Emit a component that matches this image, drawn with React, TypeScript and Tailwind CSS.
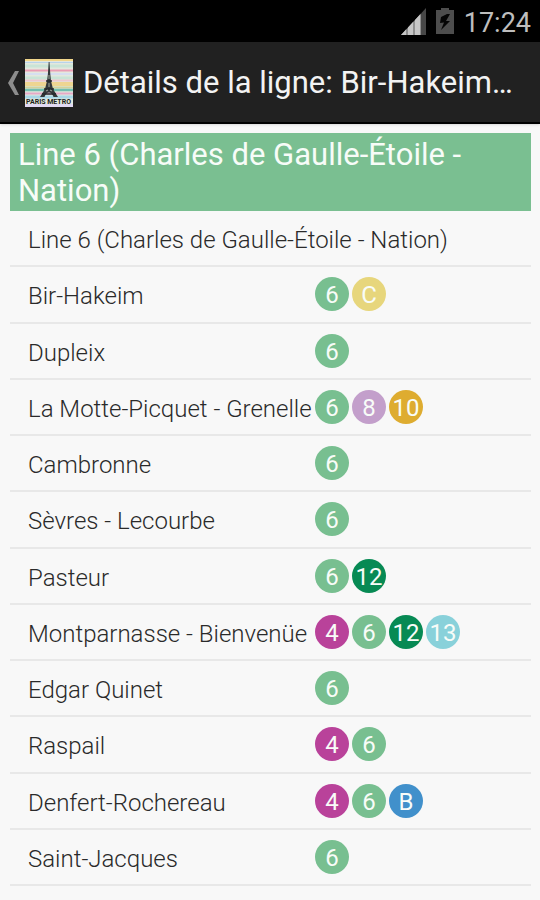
import React from "react";

const lineColors: Record<string, string> = {
  "4": "bg-[#b9429a]",
  "6": "bg-[#78bf90]",
  "8": "bg-[#c39fcb]",
  "10": "bg-[#deac30]",
  "12": "bg-[#078a54]",
  "13": "bg-[#89d1da]",
  B: "bg-[#4190cb]",
  C: "bg-[#e7d67c]",
};

const stations = [
  { name: "Bir-Hakeim", lines: ["6", "C"] },
  { name: "Dupleix", lines: ["6"] },
  { name: "La Motte-Picquet - Grenelle", lines: ["6", "8", "10"] },
  { name: "Cambronne", lines: ["6"] },
  { name: "Sèvres - Lecourbe", lines: ["6"] },
  { name: "Pasteur", lines: ["6", "12"] },
  { name: "Montparnasse - Bienvenüe", lines: ["4", "6", "12", "13"] },
  { name: "Edgar Quinet", lines: ["6"] },
  { name: "Raspail", lines: ["4", "6"] },
  { name: "Denfert-Rochereau", lines: ["4", "6", "B"] },
  { name: "Saint-Jacques", lines: ["6"] },
];

const SignalIcon = () => (
  <svg width="25" height="27" viewBox="0 0 25 27" aria-hidden="true">
    <path d="M0 27 20 5.500V27Z" fill="#8f8f8f" />
    <path d="M0 27 5 21.500V27ZM7 19.500 12 14V27H7ZM14 12 19 6.500V27H14Z" fill="#c6c6c6" />
    <path d="M20 5.500 25 0V27H20Z" fill="#474747" />
  </svg>
);

const BatteryIcon = () => (
  <svg width="18" height="26" viewBox="0 0 18 26" aria-hidden="true">
    <path d="M5 0H13V2H18V26H0V2H5Z" fill="#4d4d4d" />
    <path d="M11 6 5 9 4 15 8 14.500 5 22 14 13 10 13 14 6Z" fill="#050505" />
  </svg>
);

const AppLogo = () => (
  <svg width="48" height="48" viewBox="0 0 48 48" aria-hidden="true">
    <rect width="48" height="48" fill="#e3e8de" />
    <path d="M0 1H48" stroke="#f1d68b" strokeWidth="2" />
    <path d="M0 3.500H48" stroke="#b8d3ea" />
    <path d="M0 7H48M0 19H48" stroke="#c9e4d6" strokeWidth="3" />
    <path d="M0 11.500H48" stroke="#eb9db4" strokeWidth="2" />
    <path d="M0 15H48" stroke="#d6dff0" strokeWidth="2" />
    <path d="M0 21.500H48" stroke="#eec8cf" strokeWidth="2" />
    <path d="M0 25H48" stroke="#eed591" strokeWidth="4" />
    <path d="M0 28.500H48" stroke="#d3d29a" strokeWidth="2" />
    <path d="M0 31H48" stroke="#72bfb1" strokeWidth="2.500" />
    <path d="M0 34.500H48" stroke="#e6a9c7" strokeWidth="2" />
    <path d="M0 38H48" stroke="#a9d7e7" strokeWidth="3" />
    <path d="M0 46.500H48" stroke="#e1d9f3" strokeWidth="3" />
    {/* Tower */}
    <path
      d="M24 3 24.500 3 25.300 15 26 22 28 30 33 38H28.500Q27 33.500 24 33.500T19.500 38H15L20 30 22 22 22.900 15 23.700 3Z"
      fill="#34383a"
    />
    <path d="M21 22H27M19 30H29M17 35H31" stroke="#25292b" strokeWidth="1.300" />
    <path d="M24 16V20M24 24V28M21 32 23 31M27 32 25 31" stroke="#aeb5a8" strokeWidth="0.900" />
    <text
      x="1"
      y="45"
      fontSize="7"
      fontWeight="bold"
      fontFamily="Roboto, sans-serif"
      fill="#1c1f21"
    >
      PARIS METRO
    </text>
  </svg>
);

const LineBadge = ({ line }: { line: string }) => (
  <span
    className={`flex size-[34px] items-center justify-center rounded-full pt-0.5 text-2xl font-normal text-[#f8fcf8] ${lineColors[line]}`}
  >
    {line}
  </span>
);

const App = () => {
  return (
    <div className="flex min-h-screen flex-col bg-[#f8f8f8] font-['Roboto',sans-serif]">
      {/* Status bar */}
      <div className="flex h-[42px] items-center justify-end gap-2.5 bg-black pr-[9px]">
        <SignalIcon />
        <BatteryIcon />
        <span className="pt-1 text-[27px] text-[#bebebe]">17:24</span>
      </div>

      {/* Action bar */}
      <header className="flex h-[82px] items-center border-b-2 border-black bg-[#212121] pt-0.5 pr-6 pl-[7px] shadow-sm">
        <button className="flex shrink-0 items-center gap-[5px]" aria-label="Retour">
          <svg width="13" height="24" viewBox="0 0 13 24" aria-hidden="true">
            <path d="M8 0H12L6 12 12 24H8L1 12Z" fill="#8d8d8d" />
          </svg>
          <AppLogo />
        </button>
        <h1 className="ml-2.5 text-[31px] text-[#f3f3f3]">
          Détails de la ligne: Bir-Hakeim…
        </h1>
      </header>

      <main className="flex flex-1 flex-col pt-[9px] pr-[9px] pb-3.5 pl-2.5">
        <h2 className="bg-[#7abf91] px-2 pt-1 pb-0.5 text-[31px] leading-9 text-[#f7fcf8]">
          Line 6 (Charles de Gaulle-Étoile - Nation)
        </h2>

        {/* Stations */}
        <ul className="flex flex-1 flex-col text-2xl font-light text-[#2a2a2a]">
          <li className="flex flex-1 items-center border-b-2 border-[#e8e8e8] pt-1 pl-[18px]">
            Line 6 (Charles de Gaulle-Étoile - Nation)
          </li>
          {stations.map((station) => (
            <li
              key={station.name}
              className="flex flex-1 items-center border-b-2 border-[#e8e8e8] pl-[18px]"
            >
              <span className="w-[287px] shrink-0 pt-1 whitespace-nowrap">
                {station.name}
              </span>
              <span className="flex gap-[3px]">
                {station.lines.map((line) => (
                  <LineBadge key={line} line={line} />
                ))}
              </span>
            </li>
          ))}
        </ul>
      </main>
    </div>
  );
};

export default App;
